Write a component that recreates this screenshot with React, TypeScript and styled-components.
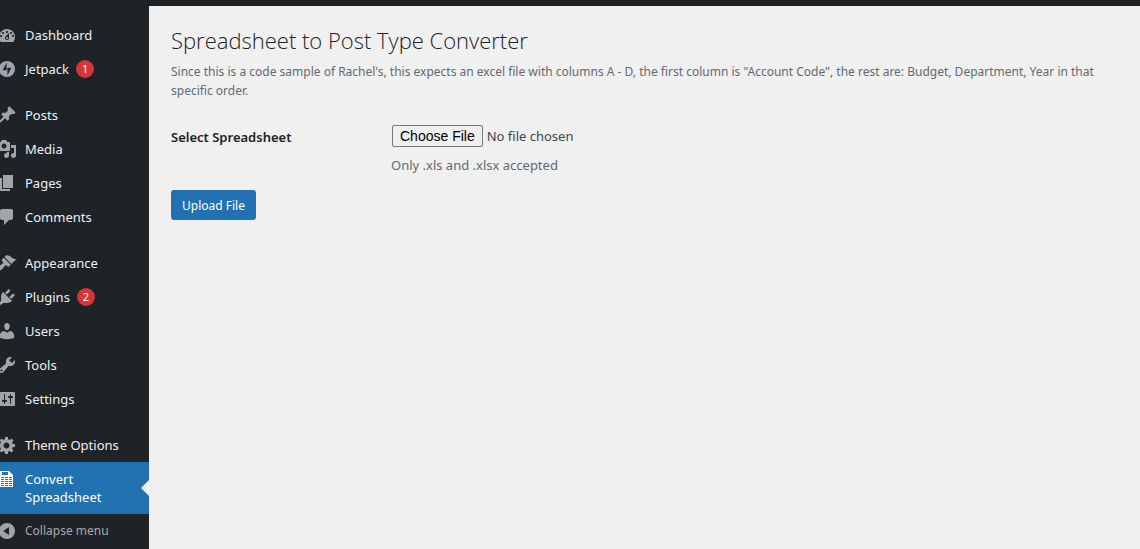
import React from 'react';
import styled, { createGlobalStyle, css } from 'styled-components';

const GlobalStyle = createGlobalStyle`
  * { box-sizing: border-box; }
  body {
    margin: 0;
    background: #f0f0f0;
    color: #3c434a;
    font-family: 'Segoe UI', 'Noto Sans', 'Open Sans', sans-serif;
    font-size: 13px;
    line-height: 18px;
  }
`;

const Page = styled.div`
  display: flex;
  flex-direction: column;
  min-height: 100vh;
`;

const AdminBar = styled.header`
  height: 6px;
  background: #1d2327;
`;

const Body = styled.div`
  display: flex;
  flex: 1;
`;

const Sidebar = styled.nav`
  flex: 0 0 149px;
  padding-top: 12px;
  background: #1d2327;
`;

const Group = styled.ul`
  list-style: none;
  margin: 0 0 12px;
  padding: 0;

  &:last-child { margin-bottom: 0; }
`;

const rowStyle = css`
  display: flex;
  align-items: flex-start;
  gap: 8px;
  width: 100%;
  padding: 8px 8px 8px 0;
  font-family: inherit;
  font-size: 13px;
  line-height: 18px;
  text-align: left;
  text-decoration: none;
`;

const MenuLink = styled.a<{ $current?: boolean }>`
  ${rowStyle}
  position: relative;
  color: ${p => (p.$current ? '#fff' : '#f0f0f1')};
  background: ${p => (p.$current ? '#2271b1' : 'transparent')};
  --icon: ${p => (p.$current ? '#fff' : '#a0a5aa')};

  ${p => p.$current && css`
    &::after {
      content: '';
      position: absolute;
      right: 0;
      top: 50%;
      margin-top: -8px;
      border: 8px solid transparent;
      border-left-width: 0;
      border-right-color: #f0f0f0;
    }
  `}
`;

const CollapseButton = styled.button`
  ${rowStyle}
  border: 0;
  background: none;
  color: #a7aaad;
  font-size: 12px;
  --icon: #a0a5aa;
`;

const MenuIcon = styled.svg`
  flex: none;
  width: 17px;
  height: 20px;
  margin: -1px 0;
  fill: var(--icon);
  fill-rule: evenodd;
`;

const Badge = styled.span`
  flex: none;
  width: 18px;
  height: 18px;
  margin-left: -1px;
  border-radius: 9px;
  background: #d63638;
  color: #fff;
  font-size: 11px;
  line-height: 18px;
  text-align: center;
`;

const Main = styled.main`
  flex: 1;
  min-width: 0;
  padding: 20px 20px 20px 22px;
`;

const Title = styled.h1`
  margin: 0;
  color: #1d2327;
  font-family: 'Segoe UI', 'Open Sans', 'Noto Sans', sans-serif;
  font-size: 22px;
  font-weight: 350;
  line-height: 28px;
`;

const Intro = styled.p`
  margin: 8px 0 0;
  color: #646970;
  font-size: 12px;
  line-height: 19px;
`;

const Field = styled.div`
  display: grid;
  grid-template-columns: 220px 1fr;
  align-items: start;
  margin-top: 24px;
`;

const Label = styled.label`
  padding-top: 4px;
  color: #1d2327;
  font-size: 13px;
  font-weight: 600;
`;

const FileInput = styled.input`
  display: block;
  width: 100%;
  padding: 1px;
  color: #3c434a;
  font-family: inherit;
  font-size: 13px;
  line-height: 18px;

  &::file-selector-button {
    height: 22px;
    padding: 0 7px;
    border: 1px solid #767676;
    border-radius: 2px;
    background: #efefef;
    color: #000;
    font-family: 'Liberation Sans', Arial, sans-serif;
    font-size: 14px;
  }
`;

const Hint = styled.p`
  margin: 8px 0 0;
  color: #646970;
  font-size: 13px;
`;

const SubmitButton = styled.button`
  height: 30px;
  margin-top: 16px;
  padding: 1px 11px 0;
  border: 0;
  border-radius: 3px;
  background: #2271b1;
  color: #fff;
  font-family: inherit;
  font-size: 12px;
  line-height: 29px;
`;

const icons = {
  dashboard: 'M3.76 17h12.48c1.1-1.37 1.76-3.11 1.76-5 0-4.42-3.58-8-8-8s-8 3.58-8 8c0 1.89.66 3.63 1.76 5zM10 6c.55 0 1 .45 1 1s-.45 1-1 1-1-.45-1-1 .45-1 1-1zM6 7c.55 0 1 .45 1 1s-.45 1-1 1-1-.45-1-1 .45-1 1-1zm8 0c.55 0 1 .45 1 1s-.45 1-1 1-1-.45-1-1 .45-1 1-1zm-5.37 4.55L12 8v5c0 1.1-.9 2-2 2s-2-.9-2-2c0-.57.24-1.08.63-1.45zM4 10c.55 0 1 .45 1 1s-.45 1-1 1-1-.45-1-1 .45-1 1-1zm12 0c.55 0 1 .45 1 1s-.45 1-1 1-1-.45-1-1 .45-1 1-1zm-5 3c0-.55-.45-1-1-1s-1 .45-1 1 .45 1 1 1 1-.45 1-1z',
  jetpack: 'M10 2a8 8 0 1 0 0 16 8 8 0 0 0 0-16zM9.6 11.3h-4L9.6 3.6zM10.4 16.4V8.7h4z',
  posts: 'M10.44 3.02l1.82-1.82 6.36 6.35-1.83 1.82c-1.05-.68-2.48-.57-3.41.36l-.75.75c-.92.93-1.04 2.35-.35 3.41l-1.83 1.82-2.41-2.41-2.8 2.79c-.42.42-3.38 2.71-3.8 2.29s1.86-3.39 2.28-3.81l2.79-2.79L4.1 9.36l1.83-1.82c1.05.69 2.48.57 3.4-.36l.75-.75c.93-.92 1.05-2.35.36-3.41z',
  media: 'M13 11V4c0-.55-.45-1-1-1h-1.67L9 1H5L3.67 3H2c-.55 0-1 .45-1 1v7c0 .55.45 1 1 1h10c.55 0 1-.45 1-1zM7 4.5c1.38 0 2.5 1.12 2.5 2.5S8.38 9.5 7 9.5 4.5 8.38 4.5 7 5.62 4.5 7 4.5zM14 6h5v10.5c0 1.38-1.12 2.5-2.5 2.5S14 17.88 14 16.5s1.12-2.5 2.5-2.5c.17 0 .34.02.5.05V9h-3V6zm-4 8.05V13h2v3.5c0 1.38-1.12 2.5-2.5 2.5S7 17.88 7 16.5 8.12 14 9.5 14c.17 0 .34.02.5.05z',
  pages: 'M6 15V2h10v13H6zm-1 1h8v2H3V5h2v11z',
  comments: 'M5 2h9c1.1 0 2 .9 2 2v7c0 1.1-.9 2-2 2h-2l-5 5v-5H5c-1.1 0-2-.9-2-2V4c0-1.1.9-2 2-2z',
  appearance: 'M14.48 11.06L7.41 3.99l1.5-1.5c.5-.56 2.3-.47 3.51.32 1.21.8 1.43 1.28 2.91 2.1 1.18.64 2.45 1.26 4.45.85zm-.71.71L6.7 4.7 4.93 6.47c-.39.39-.39 1.02 0 1.41l1.06 1.06c.39.39.39 1.03 0 1.42-.6.6-1.43 1.11-2.21 1.69-.35.26-.7.53-1.01.84C1.43 14.23.4 16.08 1.4 17.07c.99 1 2.84-.03 4.18-1.36.31-.31.58-.66.85-1.02.57-.78 1.08-1.61 1.69-2.21.39-.39 1.02-.39 1.41 0l1.06 1.06c.39.39 1.02.39 1.41 0z',
  plugins: 'M13.11 4.36L9.87 7.6 8 5.73l3.24-3.24c.35-.34 1.05-.2 1.56.32.52.51.66 1.21.31 1.55zm-8 1.77l.91-1.12 9.01 9.01-1.19.84c-.71.71-2.63 1.16-3.82 1.16H6.14L4.9 17.26c-.59.59-1.54.59-2.12 0-.59-.58-.59-1.53 0-2.12l1.24-1.24v-3.88c0-1.13.4-3.19 1.09-3.89zm7.26 3.97l3.24-3.24c.34-.35 1.04-.21 1.55.31.52.51.66 1.21.31 1.55l-3.24 3.25z',
  users: 'M10 9.25c-2.27 0-2.73-3.44-2.73-3.44C7 4.02 7.82 2 9.97 2c2.16 0 2.98 2.02 2.71 3.81 0 0-.41 3.44-2.68 3.44zm0 2.57L12.72 10c2.39 0 4.52 2.33 4.52 4.53v2.49s-3.65 1.13-7.24 1.13c-3.65 0-7.24-1.13-7.24-1.13v-2.49c0-2.25 1.94-4.48 4.47-4.48z',
  tools: 'M16.68 9.77c-1.34 1.34-3.3 1.67-4.95.99l-5.41 6.52c-.99.99-2.59.99-3.58 0s-.99-2.59 0-3.57l6.52-5.42c-.68-1.65-.35-3.61.99-4.95 1.28-1.28 3.12-1.62 4.72-1.06l-2.89 2.89 2.82 2.82 2.86-2.87c.53 1.58.18 3.39-1.08 4.65zM3.81 16.21c.4.39 1.04.39 1.43 0 .4-.4.4-1.04 0-1.43-.39-.4-1.03-.4-1.43 0-.39.39-.39 1.03 0 1.43z',
  settings: 'M18 16V4c0-.55-.45-1-1-1H3c-.55 0-1 .45-1 1v12c0 .55.45 1 1 1h14c.55 0 1-.45 1-1zM8 11h1c.55 0 1 .45 1 1s-.45 1-1 1H8v1.5c0 .28-.22.5-.5.5s-.5-.22-.5-.5V13H6c-.55 0-1-.45-1-1s.45-1 1-1h1V5.5c0-.28.22-.5.5-.5s.5.22.5.5V11zm5-2h-1c-.55 0-1-.45-1-1s.45-1 1-1h1V5.5c0-.28.22-.5.5-.5s.5.22.5.5V7h1c.55 0 1 .45 1 1s-.45 1-1 1h-1v5.5c0 .28-.22.5-.5.5s-.5-.22-.5-.5V9z',
  generic: 'M18 12h-2.18c-.17.7-.44 1.35-.81 1.93l1.54 1.54-2.1 2.1-1.54-1.54c-.58.36-1.23.63-1.91.79V19H8v-2.18c-.68-.16-1.33-.43-1.91-.79l-1.54 1.54-2.12-2.12 1.54-1.54c-.36-.58-.63-1.23-.79-1.91H1V9.03h2.17c.16-.7.44-1.35.8-1.94L2.43 5.55l2.1-2.1 1.54 1.54c.58-.37 1.24-.64 1.93-.81V2h3v2.18c.68.16 1.33.43 1.91.79l1.54-1.54 2.12 2.12-1.54 1.54c.36.59.64 1.24.8 1.94H18V12zm-8.5 1.5c1.66 0 3-1.34 3-3s-1.34-3-3-3-3 1.34-3 3 1.34 3 3 3z',
  spreadsheet: 'M12 2l4 4v12H3V2h9zM5 3v3h6V3H5zM4 8v1h3V8H4zm4 0v1h3V8H8zm4 0v1h3V8h-3zM4 10v1h3v-1H4zm4 0v1h3v-1H8zm4 0v1h3v-1h-3zM4 12v1h3v-1H4zm4 0v1h3v-1H8zm4 0v1h3v-1h-3zM4 14v1h3v-1H4zm4 0v1h3v-1H8zm4 0v1h3v-1h-3zM4 16v1h3v-1H4zm4 0v1h3v-1H8zm4 0v1h3v-1h-3z',
  collapse: 'M10 2a8 8 0 1 0 0 16 8 8 0 0 0 0-16zM12 13.9V6.1L6.2 10z',
};

type IconName = keyof typeof icons;

interface MenuItem {
  label: string;
  icon: IconName;
  count?: number;
  current?: boolean;
}

const menu: MenuItem[][] = [
  [
    { label: 'Dashboard', icon: 'dashboard' },
    { label: 'Jetpack', icon: 'jetpack', count: 1 },
  ],
  [
    { label: 'Posts', icon: 'posts' },
    { label: 'Media', icon: 'media' },
    { label: 'Pages', icon: 'pages' },
    { label: 'Comments', icon: 'comments' },
  ],
  [
    { label: 'Appearance', icon: 'appearance' },
    { label: 'Plugins', icon: 'plugins', count: 2 },
    { label: 'Users', icon: 'users' },
    { label: 'Tools', icon: 'tools' },
    { label: 'Settings', icon: 'settings' },
  ],
  [
    { label: 'Theme Options', icon: 'generic' },
    { label: 'Convert Spreadsheet', icon: 'spreadsheet', current: true },
  ],
];

const Icon = ({ name }: { name: IconName }) => (
  <MenuIcon viewBox="3 0 17 20" aria-hidden="true">
    <path d={icons[name]} />
  </MenuIcon>
);

export default function App() {
  return (
    <Page>
      <GlobalStyle />
      <AdminBar />
      <Body>
        <Sidebar aria-label="Main menu">
          {menu.map((items, index) => (
            <Group key={index}>
              {items.map(item => (
                <li key={item.label}>
                  <MenuLink
                    href="#"
                    $current={item.current}
                    aria-current={item.current ? 'page' : undefined}
                  >
                    <Icon name={item.icon} />
                    <span>{item.label}</span>
                    {item.count !== undefined && <Badge>{item.count}</Badge>}
                  </MenuLink>
                </li>
              ))}
              {index === menu.length - 1 && (
                <li>
                  <CollapseButton type="button">
                    <Icon name="collapse" />
                    <span>Collapse menu</span>
                  </CollapseButton>
                </li>
              )}
            </Group>
          ))}
        </Sidebar>
        <Main>
          <Title>Spreadsheet to Post Type Converter</Title>
          <Intro>
            Since this is a code sample of Rachel's, this expects an excel file with columns A - D,
            the first column is "Account Code", the rest are: Budget, Department, Year in that
            specific order.
          </Intro>
          <form onSubmit={event => event.preventDefault()}>
            <Field>
              <Label htmlFor="spreadsheet">Select Spreadsheet</Label>
              <div>
                <FileInput
                  id="spreadsheet"
                  type="file"
                  accept=".xls,.xlsx"
                  aria-describedby="spreadsheet-hint"
                />
                <Hint id="spreadsheet-hint">Only .xls and .xlsx accepted</Hint>
              </div>
            </Field>
            <SubmitButton type="submit">Upload File</SubmitButton>
          </form>
        </Main>
      </Body>
    </Page>
  );
}
